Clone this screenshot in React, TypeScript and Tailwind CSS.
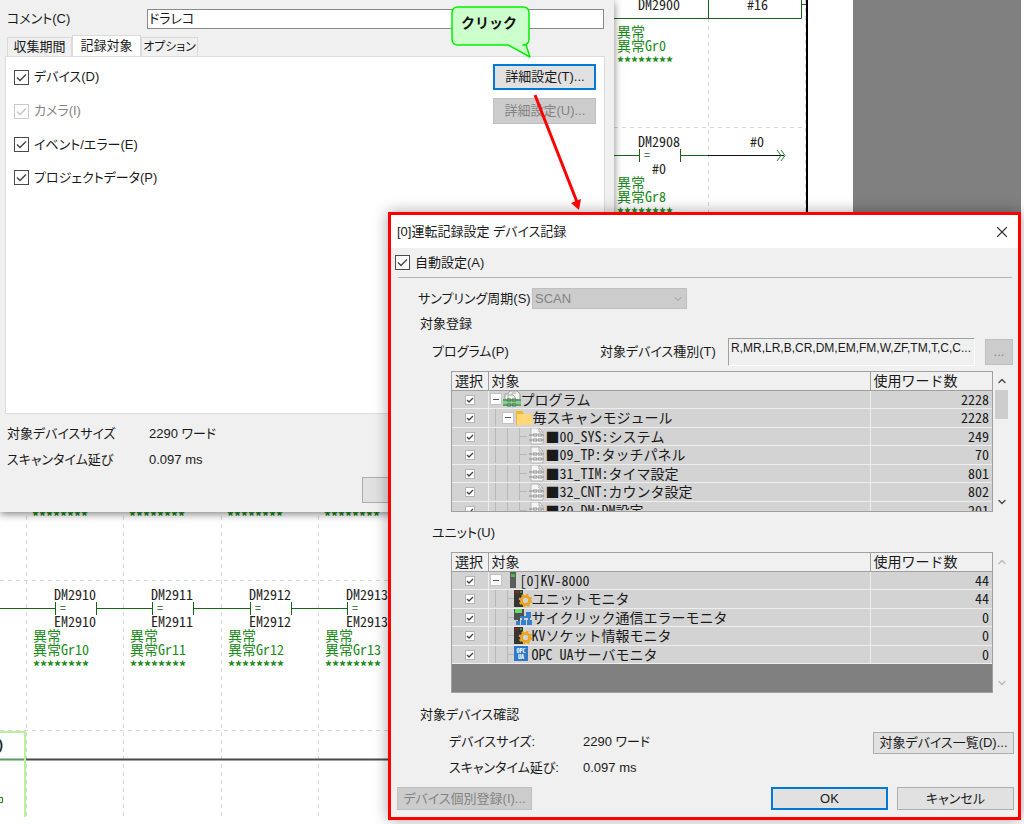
import type { ReactNode } from "react";
import { ChevronDown, ChevronUp, X } from "lucide-react";

interface Row {
  name: string;
  words: number;
  depth: number;
  icon: "root" | "folder" | "module" | "unit" | "gear" | "network" | "opc";
}

const programs: Row[] = [
  { name: "プログラム", words: 2228, depth: 0, icon: "root" },
  { name: "毎スキャンモジュール", words: 2228, depth: 1, icon: "folder" },
  { name: "■00_SYS:システム", words: 249, depth: 2, icon: "module" },
  { name: "■09_TP:タッチパネル", words: 70, depth: 2, icon: "module" },
  { name: "■31_TIM:タイマ設定", words: 801, depth: 2, icon: "module" },
  { name: "■32_CNT:カウンタ設定", words: 802, depth: 2, icon: "module" },
  { name: "■30_DM:DM設定", words: 201, depth: 2, icon: "module" },
];

const units: Row[] = [
  { name: "[0]KV-8000", words: 44, depth: 0, icon: "unit" },
  { name: "ユニットモニタ", words: 44, depth: 1, icon: "gear" },
  { name: "サイクリック通信エラーモニタ", words: 0, depth: 1, icon: "network" },
  { name: "KVソケット情報モニタ", words: 0, depth: 1, icon: "gear" },
  { name: "OPC UAサーバモニタ", words: 0, depth: 1, icon: "opc" },
];

const uiFont =
  "font-['Liberation_Sans','Noto_Sans_CJK_JP',sans-serif] [font-feature-settings:'palt']";
const monoFont =
  "font-['Noto_Sans_Mono_CJK_JP','Noto_Sans_CJK_JP',monospace] [font-feature-settings:'hwid']";

function Check({ small, disabled, label }: { small?: boolean; disabled?: boolean; label?: string }) {
  return (
    <span className={`inline-grid shrink-0 ${small ? "size-[10px]" : "size-[15px]"}`}>
      <input
        type="checkbox"
        defaultChecked
        disabled={disabled}
        aria-label={label}
        className={`[grid-area:1/1] size-full appearance-none border bg-white ${
          small ? "border-[#b4b4b4]" : "border-[#4a4a4a] disabled:border-[#cccccc]"
        }`}
      />
      <svg viewBox="0 0 15 15" className="pointer-events-none [grid-area:1/1] size-full" fill="none">
        <path
          d="M3 7.5 6 10.5 12 4.5"
          stroke={disabled ? "#c4c4c4" : "#444"}
          strokeWidth={small ? 2 : 1.4}
        />
      </svg>
    </span>
  );
}

function Option({ children, disabled }: { children: ReactNode; disabled?: boolean }) {
  return (
    <label className={`flex items-center gap-[5px] ${disabled ? "text-[#838383]" : ""}`}>
      <Check disabled={disabled} />
      {children}
    </label>
  );
}

function Button({ children, className = "", primary, disabled }: {
  children?: ReactNode;
  className?: string;
  primary?: boolean;
  disabled?: boolean;
}) {
  return (
    <button
      disabled={disabled}
      className={`flex items-center justify-center whitespace-nowrap bg-[#e1e1e1] disabled:bg-[#cccccc] disabled:border-[#bfbfbf] disabled:text-[#838383] ${
        primary ? "border-2 border-[#0078d7]" : "border border-[#adadad]"
      } ${className}`}
    >
      {children}
    </button>
  );
}

function Cog() {
  return (
    <g>
      <circle cx="11.5" cy="10.5" r="4" fill="none" stroke="#e8a523" strokeWidth="3" />
      <circle cx="11.5" cy="10.5" r="5.8" fill="none" stroke="#e8a523" strokeWidth="2" strokeDasharray="2.3 2.25" />
      <circle cx="11.5" cy="10.5" r="2.4" fill="#d3d3d3" />
    </g>
  );
}

function RowIcon({ icon }: { icon: Row["icon"] }) {
  if (icon === "unit") {
    return (
      <svg width="8" height="16" viewBox="0 0 8 16" className="ml-[6px] mr-[3px] shrink-0">
        <path fill="#5c5c5c" d="M1 0h6v16H1z" />
        <path fill="#43c143" d="M2 2h4v3H2z" />
      </svg>
    );
  }
  return (
    <svg width="18" height="18" viewBox="0 0 18 18" className="shrink-0" fill="none">
      {icon === "root" && (
        <>
          <path d="M2 11V4h3l2-3h7l3 3v7" fill="#f3f3f3" stroke="#9b9b9b" />
          <path d="M5 9V5h5l2 2v3M9 5V3h4" stroke="#aaa" />
          <path d="M0 9h18v7H0z" fill="#83cf91" />
          <path d="M0 10h5m2 0h3m2 0h6M0 15h5m2 0h3m2 0h6M5 8v4m2-4v4m3-4v4m2-4v4M5 13v4m2-4v4m3-4v4m2-4v4" stroke="#426b48" />
        </>
      )}
      {icon === "folder" && (
        <>
          <path d="M1 2h6l2 3h8v11H1z" fill="#f0b72f" />
          <path d="M2 5h15v11H2z" fill="#ffd778" />
        </>
      )}
      {icon === "module" && (
        <>
          <path d="M3 1h8l4 4v12H3z" fill="#f5f5f5" stroke="#b5b5b5" />
          <path d="M11 1v4h4" stroke="#aaa" />
          <path d="M1 8h5m2 0h3m2 0h3M1 13h5m2 0h3m2 0h3M6 6v4m2-4v4m3-4v4m2-4v4M6 11v4m2-4v4m3-4v4m2-4v4" stroke="#8a8a8a" />
        </>
      )}
      {icon === "gear" && (
        <>
          <path fill="#353535" d="M0 0h9v17H0z" />
          <path fill="#a01c1c" d="M1 1h4v2H1z" />
          <path fill="#30a030" d="M6 1h2v2H6z" />
          <Cog />
        </>
      )}
      {icon === "network" && (
        <>
          <path fill="#505050" d="M0 0h10v8H6v8H0z" />
          <path fill="#67de67" d="M1 1h7v4H1z" />
          <path fill="#d3d3d3" d="M0 12h4v5H0z" />
          <path fill="#3480cb" d="M12 4h5v4h-5zM6 8h11v2H6zM2 13h4v4H2zM7 12h5v5H7zM13 12h5v5h-5zM8 9h2v4H8zM14 8h2v5h-2z" />
        </>
      )}
      {icon === "opc" && (
        <>
          <path fill="#2f79c5" d="M0 1h14v15H0z" />
          <text x="7" y="8" textAnchor="middle" fontSize="6" fontWeight="700" fill="#fff">OPC</text>
          <text x="7" y="14" textAnchor="middle" fontSize="6" fontWeight="700" fill="#fff">UA</text>
        </>
      )}
    </svg>
  );
}

function TreeCell({ row, tree }: { row: Row; tree: "program" | "unit" }) {
  const leaf = tree === "unit" ? row.depth === 1 : row.depth === 2;
  return (
    <div className="flex h-[17px] items-center">
      {row.depth === 0 ? (
        <span className="w-px shrink-0" />
      ) : (
        <span className="ml-[6px] h-full w-[7px] shrink-0 border-l border-[#b8b8b8]" />
      )}
      {row.depth > 0 && leaf && (
        <span className="ml-[5px] flex h-full w-[7px] shrink-0 items-center border-l border-[#b8b8b8]">
          {tree === "unit" && <span className="h-px w-full bg-[#b8b8b8]" />}
        </span>
      )}
      {row.depth === 2 && (
        <span className="ml-[5px] flex h-full w-[9px] shrink-0 items-center border-l border-[#b8b8b8]">
          <span className="h-px w-[7px] bg-[#b8b8b8]" />
        </span>
      )}
      {!leaf && (
        <button
          aria-label={`${row.name}を閉じる`}
          className="mr-px flex size-[12px] shrink-0 items-center justify-center border border-[#c4c4c4] bg-white"
        >
          <span className="h-px w-[6px] bg-[#555]" />
        </button>
      )}
      <RowIcon icon={row.icon} />
      <span className="whitespace-pre">{row.name}</span>
    </div>
  );
}

function DeviceTable({ rows, tree, thumb }: { rows: Row[]; tree: "program" | "unit"; thumb?: boolean }) {
  const arrow = thumb ? "size-[12px] text-[#505050]" : "size-[12px] text-[#bdbdbd]";
  return (
    <div className="ml-[60px] mr-[10px] flex h-[141px] gap-[2px]">
      <div className={`flex-1 overflow-hidden border border-[#a0a0a0] bg-[#808080] text-[14px] leading-[17px] ${monoFont}`}>
        <table className="w-full table-fixed border-collapse">
          <thead>
            <tr className="h-[18px] border-b border-[#a0a0a0] bg-[#f0f0f0] text-left">
              <th className="w-[36px] border-r border-[#a0a0a0] p-0 pl-[3px] font-normal">選択</th>
              <th className="border-r border-[#a0a0a0] p-0 pl-[3px] font-normal">対象</th>
              <th className="w-[122px] p-0 pl-[3px] font-normal">使用ワード数</th>
            </tr>
          </thead>
          <tbody>
            {rows.map((row) => (
              <tr key={row.name} className="h-[18px] border-b border-[#eeeeee] bg-[#d3d3d3] even:h-[19px]">
                <td className="border-r border-[#eeeeee] p-0 text-center leading-[10px]">
                  <Check small label={row.name} />
                </td>
                <td className="overflow-hidden border-r border-[#eeeeee] p-0">
                  <TreeCell row={row} tree={tree} />
                </td>
                <td className="p-0 pr-[3px] text-right">{row.words}</td>
              </tr>
            ))}
          </tbody>
        </table>
      </div>
      <div className="flex w-[13px] flex-col items-center py-1">
        <ChevronUp className={arrow} strokeWidth={3} />
        {thumb && <div className="mt-[3px] h-[29px] w-full bg-[#cdcdcd]" />}
        <ChevronDown className={`mt-auto ${arrow}`} strokeWidth={3} />
      </div>
    </div>
  );
}

function Comment({ x, y, name }: { x: number; y: number; name: string }) {
  return (
    <g fill="#1a8a1a" fontWeight="500">
      <text x={x} y={y}>異常</text>
      <text x={x} y={y + 14}>異常{name}</text>
      <text x={x} y={y + 31} fontWeight="700">********</text>
    </g>
  );
}

function Ladder() {
  return (
    <svg width="853" height="817" className={`shrink-0 bg-white text-[14px] ${monoFont}`} fill="none">
      <g stroke="#d6d6d6" strokeDasharray="4 4">
        <path d="M26.5 500V817M123.5 500V817M221.5 500V817M318.5 500V817M0 580.5H400M0 730.5H400" />
        <path d="M708.5 18V220M805.5 0V220M614 127.5H806" />
      </g>
      <path d="M807 0V220" stroke="#000" strokeWidth="2" />

      <path d="M600 18.5H801.5V0M708.5 0V18M801 4.5H806M600 155.5H639.5M639.5 149V162M680.5 149V162M680 155.5H708" stroke="#17651b" />
      <path d="M708 155.5H784" stroke="#111" />
      <path d="M777 150l4 5.500-4 5.500M781 150l4 5.500-4 5.500" stroke="#2e7d32" />
      <g fill="#222">
        <text x="638" y="10">DM2900</text>
        <text x="747" y="10">#16</text>
        <text x="638" y="147">DM2908</text>
        <text x="750" y="147">#0</text>
        <text x="652" y="174">#0</text>
      </g>
      <text x="644" y="159" fontSize="12" fill="#17651b">=</text>
      <Comment x={617} y={37} name="Gr0" />
      <Comment x={617} y={188} name="Gr8" />

      {[0, 1, 2, 3].map((i) => {
        const x = Math.round(i * 97.3);
        return (
          <g key={i}>
            <text x={x + 32} y={522} fill="#1a8a1a" fontWeight="700">********</text>
            <path d={`M${x - 1} 608.5H${x + 55}M${x + 55.5} 602V615M${x + 96.5} 602V615`} stroke="#17651b" />
            <text x={x + 60} y={612} fontSize="12" fill="#17651b">=</text>
            <text x={x + 54} y={600} fill="#222">DM291{i}</text>
            <text x={x + 54} y={627} fill="#222">EM291{i}</text>
            <path d={`M${x + 96} 608.5H${x + 100}`} stroke="#17651b" />
            <Comment x={x + 33} y={641} name={`Gr1${i}`} />
          </g>
        );
      })}

      <path d="M26 759.5H400" stroke="#4a4a4a" strokeWidth="2" />
      <path d="M0 759.5H25" stroke="#5a9a5a" strokeWidth="2" />
      <path d="M0 732H25V817" stroke="#b9f09a" strokeWidth="2" />
      <text x="4" y="750" textAnchor="end" fontWeight="700" fill="#222">)</text>
      <path d="M0 797.5H2.500V802.500H0" stroke="#1a8a1a" />
    </svg>
  );
}

function RecordWindow() {
  return (
    <section className="absolute left-0 top-0 w-[60%] bg-[#f0f0f0] pb-[9px] shadow-[0_2px_8px_rgba(0,0,0,0.5)]">
      <div className="flex items-center pl-[7px] pr-[10px] pt-[9px]">
        <label htmlFor="comment" className="w-[140px]">コメント(C)</label>
        <input
          id="comment"
          defaultValue="ドラレコ"
          className="h-[20px] min-w-0 flex-1 border border-[#8a8a8a] bg-white px-px"
        />
      </div>
      <div role="tablist" className="mt-[6px] flex h-[21px] items-end whitespace-nowrap pl-[7px]">
        <button role="tab" className="h-[19px] w-[65px] border border-b-0 border-[#d9d9d9] leading-[18px]">収集期間</button>
        <button role="tab" aria-selected className="h-[21px] w-[69px] border border-b-0 border-[#d9d9d9] bg-white leading-[18px]">記録対象</button>
        <button role="tab" className="flex h-[19px] w-[57px] justify-center border border-b-0 border-[#d9d9d9] text-[12px] leading-[18px]">オプション</button>
      </div>
      <div className="ml-[5px] mr-[9px] h-[358px] border border-[#dcdcdc] bg-white pl-[8px] pr-[8px] pt-[3px]">
        <div className="flex h-[34px] items-center justify-between">
          <Option>デバイス(D)</Option>
          <Button primary className="h-[26px] w-[103px]">詳細設定(T)...</Button>
        </div>
        <div className="flex h-[34px] items-center justify-between">
          <Option disabled>カメラ(I)</Option>
          <Button disabled className="h-[26px] w-[103px]">詳細設定(U)...</Button>
        </div>
        <div className="flex h-[33px] items-center"><Option>イベント/エラー(E)</Option></div>
        <div className="flex h-[33px] items-center"><Option>プロジェクトデータ(P)</Option></div>
      </div>
      <dl className="grid grid-cols-[142px_1fr] gap-y-[6px] pl-[7px] pt-[10px]">
        <dt>対象デバイスサイズ</dt>
        <dd>2290 ワード</dd>
        <dt>スキャンタイム延び</dt>
        <dd>0.097 ms</dd>
      </dl>
      <Button className="ml-[362px] mt-[7px] h-[26px] w-[104px]" />
    </section>
  );
}

function DeviceDialog() {
  return (
    <section
      role="dialog"
      aria-labelledby="dialog-title"
      className="absolute left-[388px] right-[3px] top-[212px] border-3 border-[#ff0000] bg-[#f0f0f0] shadow-[0_0_14px_rgba(0,0,0,0.35)]"
    >
      <header className="flex h-[33px] items-center justify-between bg-white pl-[6px] pr-[7px]">
        <h1 id="dialog-title">[0]運転記録設定 デバイス記録</h1>
        <button aria-label="閉じる"><X className="size-[18px] text-[#333]" strokeWidth={1.5} /></button>
      </header>

      <div className="flex h-[29px] items-center pl-[4px]"><Option>自動設定(A)</Option></div>
      <hr className="ml-[7px] mr-[6px] border-[#b4b4b4]" />

      <div className="mt-[10px] flex h-[21px] items-center pl-[27px]">
        <label htmlFor="cycle" className="w-[114px] whitespace-nowrap">サンプリング周期(S)</label>
        <div className="grid w-[155px] items-center">
          <select
            id="cycle"
            disabled
            className="[grid-area:1/1] h-[21px] w-full appearance-none border border-[#bfbfbf] bg-[#cccccc] px-[2px] text-[#838383]"
          >
            <option>SCAN</option>
          </select>
          <ChevronDown className="pointer-events-none [grid-area:1/1] mr-[3px] size-[12px] justify-self-end text-[#999]" />
        </div>
      </div>
      <h2 className="mt-[5px] pl-[29px]">対象登録</h2>

      <div className="mt-[4px] flex h-[28px] items-center pl-[41px] pr-[5px]">
        <h3 className="w-[168px]">プログラム(P)</h3>
        <label htmlFor="kinds" className="w-[128px] whitespace-nowrap">対象デバイス種別(T)</label>
        <input
          id="kinds"
          readOnly
          value="R,MR,LR,B,CR,DM,EM,FM,W,ZF,TM,T,C,C..."
          className="h-[28px] min-w-0 flex-1 border border-b-white border-l-[#a0a0a0] border-r-white border-t-[#a0a0a0] bg-transparent pb-[8px] pl-[2px] text-[12px]"
        />
        <Button disabled className="ml-[10px] h-[26px] w-[28px]">...</Button>
      </div>

      <div className="mt-[5px]"><DeviceTable rows={programs} tree="program" thumb /></div>
      <h3 className="mb-[9px] mt-[11px] pl-[41px]">ユニット(U)</h3>
      <DeviceTable rows={units} tree="unit" />

      <h2 className="mt-[12px] pl-[29px]">対象デバイス確認</h2>
      <div className="mt-[7px] flex items-start justify-between pl-[58px] pr-[4px]">
        <dl className="grid grid-cols-[134px_1fr] gap-y-[6px]">
          <dt>デバイスサイズ:</dt>
          <dd>2290 ワード</dd>
          <dt>スキャンタイム延び:</dt>
          <dd>0.097 ms</dd>
        </dl>
        <Button className="h-[22px] w-[141px]">対象デバイス一覧(D)...</Button>
      </div>
      <footer className="flex gap-[9px] pb-[7px] pl-[6px] pr-[4px] pt-[9px]">
        <Button disabled className="mr-auto h-[23px] w-[135px]">デバイス個別登録(I)...</Button>
        <Button primary className="h-[23px] w-[117px]">OK</Button>
        <Button className="h-[23px] w-[117px]">キャンセル</Button>
      </footer>
    </section>
  );
}

function Callout() {
  return (
    <svg width="140" height="212" className="pointer-events-none absolute left-[450px] top-0" fill="none">
      <path
        d="M8 7H73Q79 7 79 13V39Q79 45 73 45H76L80 57 58 45H8Q2 45 2 39V13Q2 7 8 7Z"
        fill="#ccffcc"
        stroke="#00f000"
        strokeWidth="1.5"
        strokeLinejoin="round"
      />
      <text x="11" y="28" fontSize="14" fontWeight="700" fill="#111" className="[font-feature-settings:normal]">クリック</text>
      <path d="M85 95 127 202" stroke="#f00" strokeWidth="3" />
      <path d="M129 210 121 203 131 199Z" fill="#f00" />
    </svg>
  );
}

export default function App() {
  return (
    <main className={`relative min-h-screen overflow-hidden bg-white text-[13px] leading-[20px] text-[#1a1a1a] ${uiFont}`}>
      <div className="flex pr-[3px]">
        <Ladder />
        <div className="flex-1 bg-[#808080]" />
      </div>
      <RecordWindow />
      <DeviceDialog />
      <Callout />
    </main>
  );
}
